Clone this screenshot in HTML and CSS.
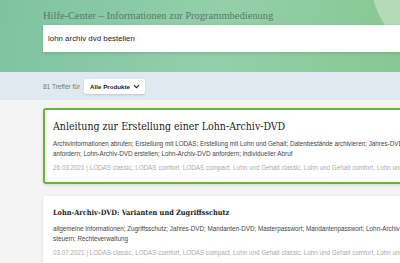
FILE: index.html
```html
<!DOCTYPE html>
<html lang="de">
<head>
  <meta charset="UTF-8" />
  <meta name="viewport" content="width=device-width, initial-scale=1.0"/>
  <title>Hilfe-Center</title>
  <link rel="stylesheet" href="styles.css">
</head>
<body>

  <!-- Header with search -->
  <header class="hero">
    <div class="hero-glow"></div>
    <div class="hero-inner">
      <h1 class="hero-title">Hilfe-Center – Informationen zur Programmbedienung</h1>
      <div class="search-box">lohn archiv dvd bestellen</div>
    </div>
  </header>

  <!-- Filter bar -->
  <div class="filter-bar">
    <span class="hits">81 Treffer für</span>
    <button class="product-select">
      Alle Produkte
      <svg width="7" height="5" viewBox="0 0 7 5"><path d="M1 1.2l2.5 2.5 2.5-2.5" fill="none" stroke="#222" stroke-width="1.1"/></svg>
    </button>
  </div>

  <!-- Results -->
  <main class="results">
    <div class="result active">
      <h2 class="result-title big">Anleitung zur Erstellung einer Lohn-Archiv-DVD</h2>
      <p class="result-tags">Archivinformationen abrufen; Erstellung mit LODAS; Erstellung mit Lohn und Gehalt; Datenbestände archivieren; Jahres-DVD<br>anfordern; Lohn-Archiv-DVD erstellen; Lohn-Archiv-DVD anfordern; individueller Abruf</p>
      <p class="result-meta">26.03.2021 | LODAS classic, LODAS comfort, LODAS compact, Lohn und Gehalt classic, Lohn und Gehalt comfort, Lohn und Gehalt compact</p>
    </div>

    <div class="result">
      <h2 class="result-title">Lohn-Archiv-DVD: Varianten und Zugriffsschutz</h2>
      <p class="result-tags">allgemeine Informationen; Zugriffsschutz; Jahres-DVD; Mandanten-DVD; Masterpasswort; Mandantenpasswort; Lohn-Archiv;<br>steuern; Rechteverwaltung</p>
      <p class="result-meta">03.07.2021 | LODAS classic, LODAS comfort, LODAS compact, Lohn und Gehalt classic, Lohn und Gehalt comfort, Lohn und Gehalt compact</p>
    </div>
  </main>

</body>
</html>
```

FILE: styles.css
```css
body {
  font-family: 'Liberation Sans', Arial, sans-serif;
  background: #f4f4f4;
  margin: 0;
  padding: 0;
  overflow: hidden;
}

.hero {
  position: relative;
  height: 72px;
  background: linear-gradient(100deg, #7ec3a0 0%, #94cfaa 55%, #88c792 100%);
  overflow: hidden;
}

.hero-glow {
  position: absolute;
  top: -100px;
  left: 371px;
  width: 160px;
  height: 160px;
  border-radius: 50%;
  background: #b4dbb5;
}

.hero-inner {
  position: relative;
  padding: 10px 0 0 43px;
}

.hero-title {
  margin: 0 0 3px;
  font-family: 'Liberation Serif', serif;
  font-weight: normal;
  font-size: 10.5px;
  line-height: 12px;
  color: #5b7a6a;
  white-space: nowrap;
}

.search-box {
  width: 420px;
  height: 27px;
  box-sizing: border-box;
  background: #fff;
  padding: 0 5px;
  font-size: 7.9px;
  line-height: 27px;
  color: #222;
  box-shadow: 0 1px 3px rgba(0,0,0,0.15);
}

.filter-bar {
  display: flex;
  align-items: center;
  gap: 4px;
  height: 28px;
  padding-left: 43px;
  background: #dfe9ef;
}

.hits {
  font-size: 6.5px;
  color: #777;
}

.product-select {
  display: flex;
  align-items: center;
  gap: 3px;
  height: 15px;
  padding: 0 5px 0 6px;
  background: #fff;
  border: none;
  border-radius: 2px;
  box-shadow: 0 1px 2px rgba(0,0,0,0.15);
  font-family: inherit;
  font-size: 6.2px;
  font-weight: bold;
  color: #222;
}

.results {
  padding: 8px 0 0 43px;
}

.result {
  width: 420px;
  box-sizing: border-box;
  background: #fff;
  border: 2px solid transparent;
  border-radius: 3px;
  padding: 9px 8px 9px 8px;
  margin-bottom: 12px;
  box-shadow: 0 1px 3px rgba(0,0,0,0.12);
  white-space: nowrap;
}

.result.active {
  border-color: #63b935;
}

.result-title {
  margin: 0 0 5px;
  font-family: 'DejaVu Serif', serif;
  font-stretch: condensed;
  font-size: 7.3px;
  line-height: 12px;
  font-weight: bold;
  color: #222;
}

.result-title.big {
  margin-bottom: 6px;
  font-size: 10.5px;
  line-height: 14px;
  font-weight: normal;
}

.result-tags {
  margin: 0 0 4px;
  font-size: 6.3px;
  line-height: 10px;
  color: #444;
}

.result-meta {
  margin: 0;
  font-size: 6.3px;
  line-height: 10px;
  color: #aaa;
}
```
